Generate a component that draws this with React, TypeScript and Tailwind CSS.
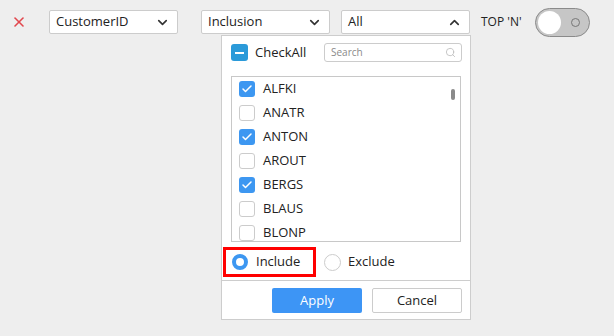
import { X, ChevronDown, ChevronUp, Search, Check } from "lucide-react";

const items = [
  { name: "ALFKI", checked: true },
  { name: "ANATR", checked: false },
  { name: "ANTON", checked: true },
  { name: "AROUT", checked: false },
  { name: "BERGS", checked: true },
  { name: "BLAUS", checked: false },
  { name: "BLONP", checked: false },
];

function Box({ label, width, up }: { label: string; width: string; up?: boolean }) {
  return (
    <div
      className={`${width} h-6 flex items-center justify-between bg-white border border-[#cccccc] rounded-[2px] pl-[6px] pr-[7px] text-[13px] text-[#222]`}
    >
      <span>{label}</span>
      {up ? (
        <ChevronUp size={15} strokeWidth={2.6} className="text-[#333]" />
      ) : (
        <ChevronDown size={15} strokeWidth={2.6} className="text-[#333]" />
      )}
    </div>
  );
}

export default function App() {
  return (
    <div
      className="relative w-[614px] h-[336px] bg-[#eeeeee] pt-[10px] overflow-hidden"
      style={{ fontFamily: '"Open Sans", "Noto Sans", sans-serif' }}
    >
      {/* filter row */}
      <div className="flex items-center h-6">
        <X size={16} strokeWidth={2.4} className="ml-[11px] text-[#e1474d]" />
        <div className="ml-[22px]">
          <Box label="CustomerID" width="w-[129px]" />
        </div>
        <div className="ml-[23px]">
          <Box label="Inclusion" width="w-[129px]" />
        </div>
        <div className="ml-[11px]">
          <Box label="All" width="w-[129px]" up />
        </div>
        <span className="ml-[11px] text-[12px] text-[#222]">TOP 'N'</span>
        <div className="ml-[13px] w-[55px] h-[29px] rounded-full bg-[#c6c6c6] border-[1.5px] border-[#8a8a8a] flex items-center justify-between pl-[2px] pr-[9px]">
          <div className="w-[23px] h-[23px] rounded-full bg-white" />
          <div className="w-[9px] h-[9px] rounded-full border-[1.5px] border-[#777]" />
        </div>
      </div>

      {/* dropdown popup */}
      <div className="absolute left-[221px] top-[35px] w-[250px] h-[285px] bg-white border border-[#cdcdcd] flex flex-col">
        <div className="h-[33px] flex items-center pl-[9px] pr-[8px]">
          <div className="w-[17px] h-[17px] rounded-[3px] bg-[#2b9ad9] flex items-center justify-center">
            <div className="w-[9px] h-[2px] bg-white" />
          </div>
          <span className="ml-[7px] text-[13px] text-[#222]">CheckAll</span>
          <div className="ml-auto w-[138px] h-[19px] border border-[#cccccc] rounded-[3px] flex items-center justify-between pl-[6px] pr-[5px]">
            <span className="text-[10px] text-[#8a8a8a]">Search</span>
            <Search size={11} strokeWidth={1.8} className="text-[#bbb]" />
          </div>
        </div>

        <div className="relative mt-[7px] ml-[9px] w-[230px] h-[166px] border border-[#c8c8c8] overflow-hidden">
          {items.map((it) => (
            <div key={it.name} className="h-6 flex items-center pl-[7px]">
              {it.checked ? (
                <div className="w-4 h-4 rounded-[3px] bg-[#3d97f1] flex items-center justify-center">
                  <Check size={12} strokeWidth={3} className="text-white" />
                </div>
              ) : (
                <div className="w-4 h-4 rounded-[3px] border border-[#cccccc] bg-white" />
              )}
              <span className="ml-2 text-[13px] text-[#222]">{it.name}</span>
            </div>
          ))}
          <div className="absolute right-[5px] top-[12px] w-[4px] h-[11px] rounded-full bg-[#8a8a8a]" />
        </div>

        <div className="mt-[5px] h-[30px] flex items-center">
          <div className="ml-[1px] w-[93px] h-[30px] border-[3px] border-[#ff0000] flex items-center pl-[6px]">
            <div className="w-4 h-4 rounded-full border-[4px] border-[#3d97f1] bg-white" />
            <span className="ml-2 text-[13px] text-[#222]">Include</span>
          </div>
          <div className="ml-[8px] w-[17px] h-[17px] rounded-full border border-[#cccccc] bg-white" />
          <span className="ml-[7px] text-[13px] text-[#222]">Exclude</span>
        </div>

        <div className="mt-[3px] border-t border-[#cdcdcd]" />

        <div className="pt-[7px] pr-[8px] flex justify-end gap-[10px]">
          <button className="w-[90px] h-[25px] rounded-[2px] bg-[#3d95f5] text-white text-[13px]">
            Apply
          </button>
          <button className="w-[90px] h-[25px] rounded-[2px] bg-white border border-[#cccccc] text-[#222] text-[13px]">
            Cancel
          </button>
        </div>
      </div>
    </div>
  );
}
